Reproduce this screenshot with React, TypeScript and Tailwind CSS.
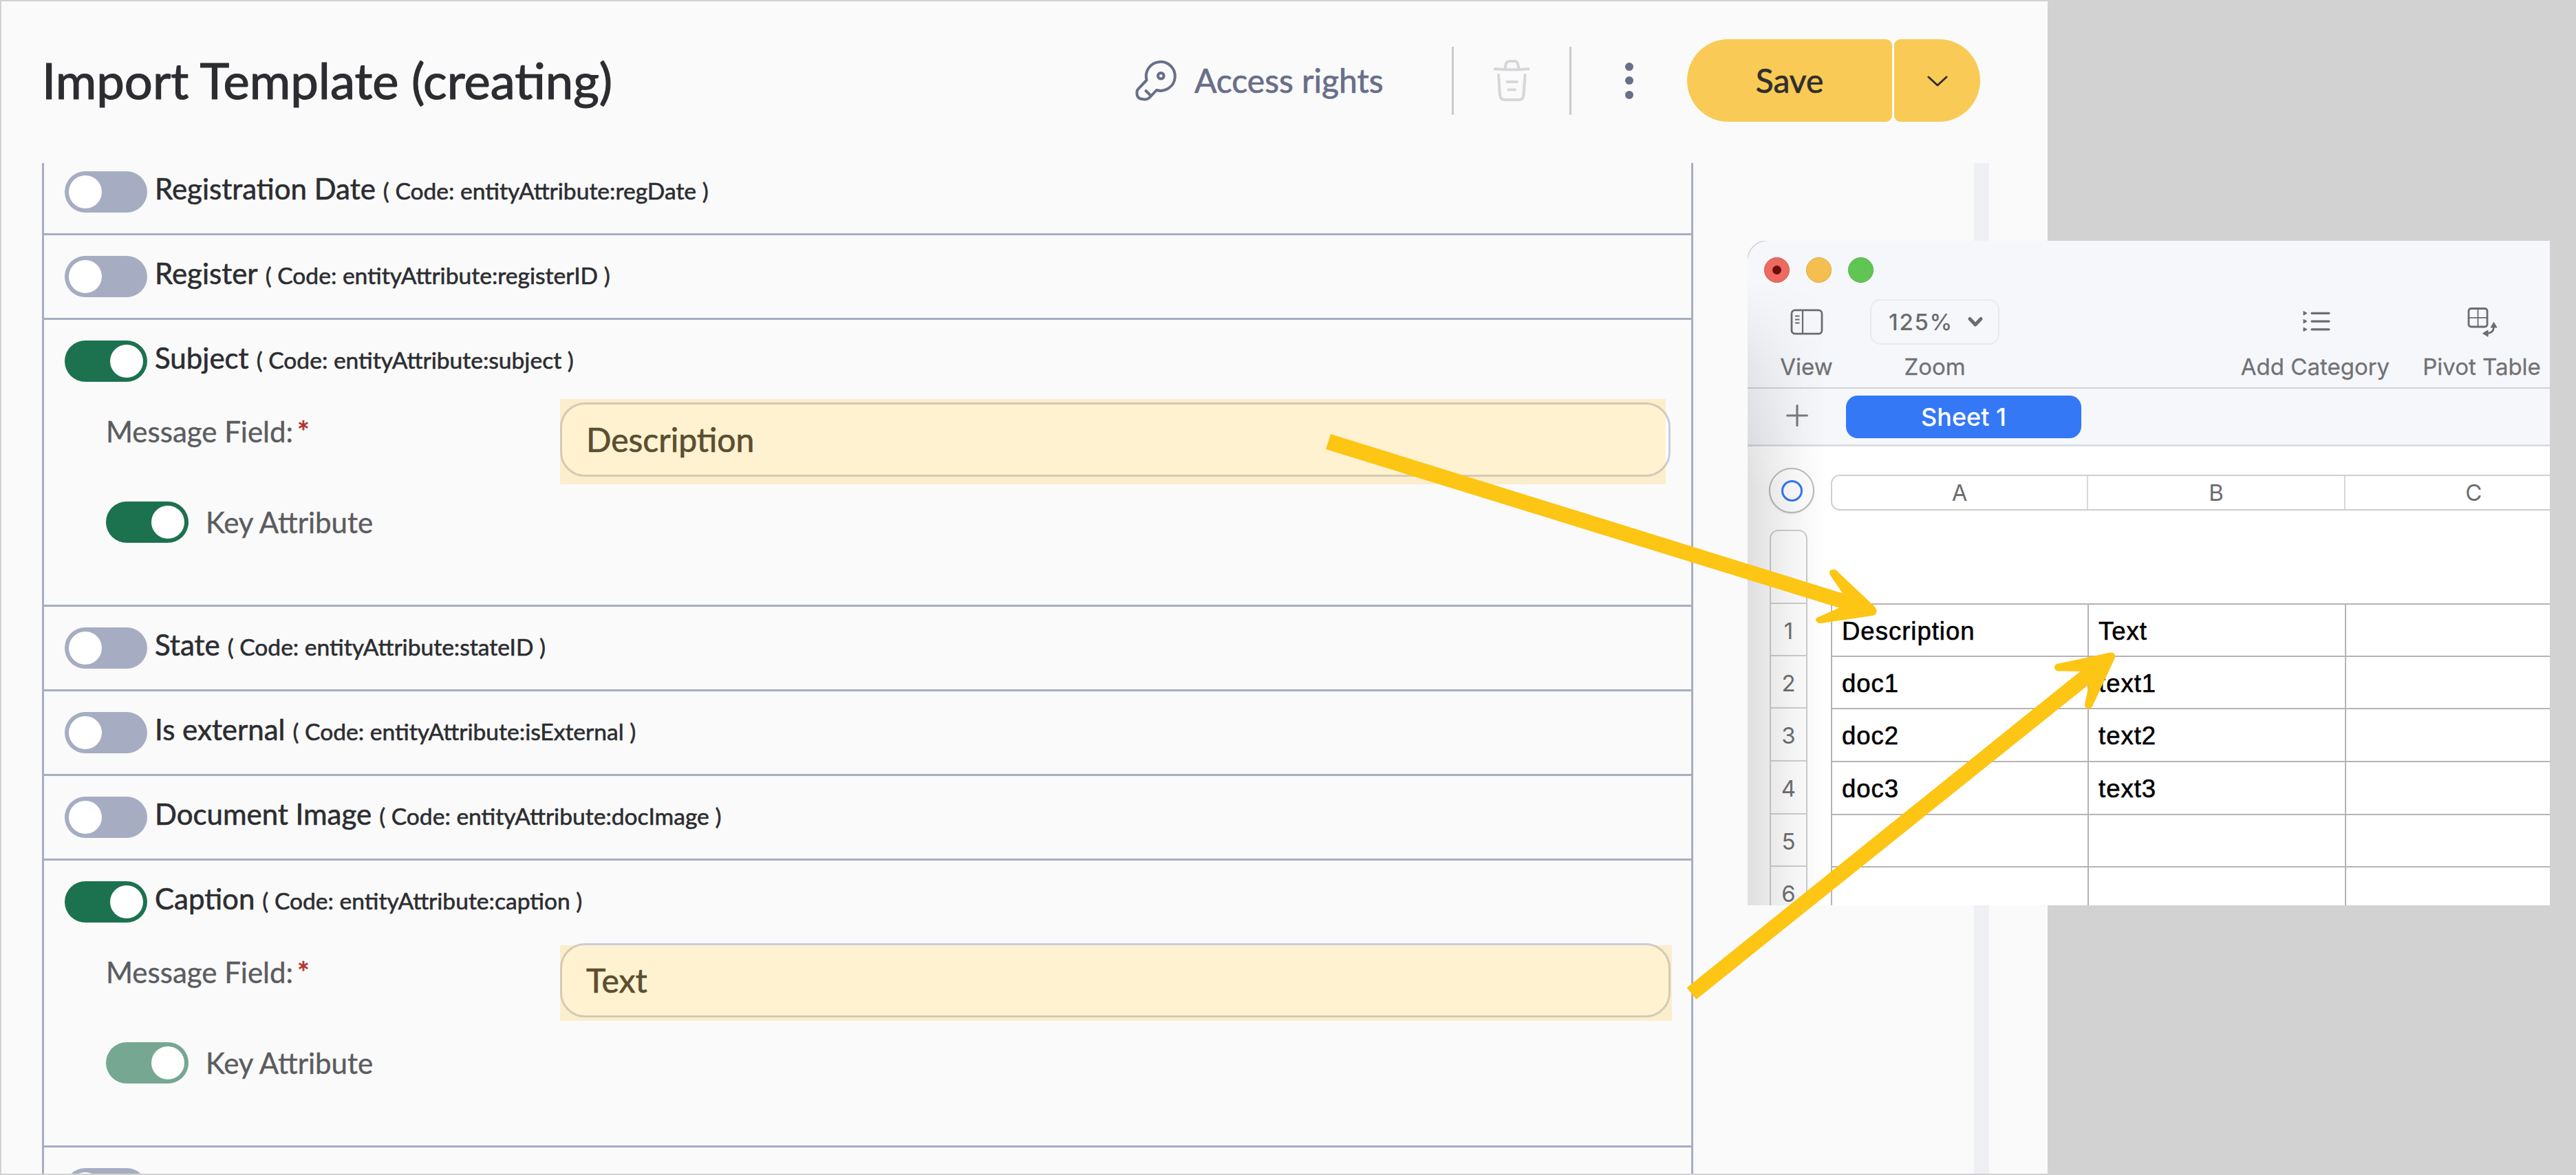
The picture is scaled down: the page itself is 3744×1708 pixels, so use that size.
import type { ReactNode } from 'react';

function Toggle({ on = false, dim = false }: { on?: boolean; dim?: boolean }) {
  const track = on ? (dim ? 'justify-end bg-[#76a793]' : 'justify-end bg-[#1c724f]') : 'justify-start bg-[#a6adc3]';
  return (
    <span className={`flex h-[60px] w-[120px] shrink-0 items-center rounded-full px-[6px] ${track}`}>
      <span className="h-12 w-12 rounded-full bg-white" />
    </span>
  );
}

function AttributeRow({ label, code, on, children }: { label: string; code: string; on?: boolean; children?: ReactNode }) {
  return (
    <div className="shrink-0 border-b-[3px] border-[#a8adc1] pl-[30px] pt-[30px]">
      <div className="flex h-[60px] items-center">
        <Toggle on={on} />
        <div className="-mt-[8px] ml-[11px] flex items-baseline gap-[11px] whitespace-nowrap text-[42px] leading-[60px] text-[#2c2d31] [-webkit-text-stroke:0.600px_#2c2d31]">
          <span>{label}</span>
          <span className="text-[33.6px]">( Code: {code} )</span>
        </div>
      </div>
      {children ?? <div className="h-[30px]" />}
    </div>
  );
}

function FieldSettings({ value, dim, highlight }: { value: string; dim?: boolean; highlight: string }) {
  return (
    <div className="h-[324px] pl-[60px] pt-[30px]">
      <div className="flex h-[108px]">
        <div className="mt-[12px] flex h-[60px] w-[660px] gap-[6px] text-[42px] leading-[60px] text-[#5b5c60] [-webkit-text-stroke:0.400px_#5b5c60]">
          <span>Message Field:</span>
          <span className="text-[#b5332c] [-webkit-text-stroke:0.800px_#b5332c]">*</span>
        </div>
        <div className="relative h-[108px] w-[1614px] rounded-[36px] border-[3px] border-[#c9ccdc] bg-white">
          <div className="pl-[35px] text-[48px] leading-[102px] text-[#2e2f33] [-webkit-text-stroke:0.700px_#2e2f33]">{value}</div>
          <div className={`absolute bg-[#ffc329]/[0.215] ${highlight}`} />
        </div>
      </div>
      <div className="mt-[36px] flex items-center gap-[25px] text-[42px] leading-[60px] text-[#5b5c60] [-webkit-text-stroke:0.400px_#5b5c60]">
        <Toggle on dim={dim} />
        <span>Key Attribute</span>
      </div>
    </div>
  );
}

function KeyIcon() {
  return (
    <svg className="h-[62px] w-[62px]" viewBox="0 0 62 62" fill="none" stroke="#696e89" strokeWidth="4" strokeLinecap="round" strokeLinejoin="round">
      <path d="M17.500 30.200A21 21 0 1 1 32 45L22.600 55Q19.500 58.600 15 58.400L11.500 58.100Q6.500 57.600 4.700 54.600Q3.300 52.500 3.300 48.500Q3.200 45.600 5 43.700L17.500 30.500" />
      <path d="M16.500 46L22.500 52" />
      <circle cx="38.300" cy="24.200" r="4.300" />
    </svg>
  );
}

function TrashIcon() {
  return (
    <svg className="h-[62px] w-[54px]" viewBox="0 0 54 62" fill="none" stroke="#d5d7da" strokeWidth="4" strokeLinecap="round" strokeLinejoin="round">
      <path d="M1 14Q27 16.500 53 14" strokeLinecap="butt" />
      <path d="M17.500 13L18.500 8Q19.700 3 24 3H31Q35 3 36 7L37.500 13" />
      <path d="M8 23L10 52Q10.500 59 17 59H38Q44 59 44.500 52L46.500 23" />
      <path d="M20.500 33H35M22.500 44.500H32" />
    </svg>
  );
}

function FormPanel() {
  return (
    <section className="flex h-[1704px] w-[2974px] flex-col bg-[#fafafa]">
      <header className="mb-[5px] flex h-[230px] shrink-0 items-center pl-[59px] text-[#696e89]">
        <h1 className="-mt-[2px] w-[1588px] text-[72.4px] leading-[90px] text-[#2c2d31] [-webkit-text-stroke:1.200px_#2c2d31]">Import Template (creating)</h1>
        <KeyIcon />
        <span className="ml-[25px] w-[374px] text-[48px] leading-[60px] [-webkit-text-stroke:0.700px_#696e89]">Access rights</span>
        <span className="h-[99px] w-[3px] bg-[#cbcbcc]" />
        <span className="flex w-[168px] justify-center"><TrashIcon /></span>
        <span className="h-[99px] w-[3px] bg-[#cbcbcc]" />
        <span className="ml-[78px] flex w-[12px] flex-col gap-[8.500px]">
          <i className="h-3 w-3 rounded-full bg-[#696e89]" />
          <i className="h-3 w-3 rounded-full bg-[#696e89]" />
          <i className="h-3 w-3 rounded-full bg-[#696e89]" />
        </span>
        <span className="ml-[78px] flex h-[120px] w-[298px] items-center justify-center rounded-l-[60px] rounded-r-[9px] bg-[#f9cb56] text-[48px] leading-[60px] text-[#302f2d] [-webkit-text-stroke:0.700px_#302f2d]">Save</span>
        <span className="ml-[3px] flex h-[120px] w-[125px] items-center justify-center rounded-l-[9px] rounded-r-[60px] bg-[#f9cb56]">
          <svg className="h-[16px] w-[30px] translate-y-px" viewBox="0 0 30 16" fill="none" stroke="#302f2d" strokeWidth="3" strokeLinecap="round" strokeLinejoin="round">
            <path d="M2 2L15 14L28 2" />
          </svg>
        </span>
      </header>
      <div className="flex min-h-0 flex-1 pl-[59px]">
        <div className="flex h-full w-[2400px] flex-col overflow-hidden border-x-[3px] border-[#a8adc1]">
          <div className="-mt-[18px] shrink-0">
            <AttributeRow label="Registration Date" code="entityAttribute:regDate" />
          </div>
          <AttributeRow label="Register" code="entityAttribute:registerID" />
          <AttributeRow label="Subject" code="entityAttribute:subject" on>
            <FieldSettings value="Description" highlight="-top-[8px] -left-[3px] h-[124px] w-[1607px]" />
          </AttributeRow>
          <AttributeRow label="State" code="entityAttribute:stateID" />
          <AttributeRow label="Is external" code="entityAttribute:isExternal" />
          <AttributeRow label="Document Image" code="entityAttribute:docImage" />
          <AttributeRow label="Caption" code="entityAttribute:caption" on>
            <FieldSettings value="Text" dim highlight="top-0 -left-[3px] h-[110px] w-[1616px]" />
          </AttributeRow>
          <div className="h-[38px] overflow-hidden pl-[30px] pt-[30px]"><Toggle /></div>
        </div>
        <div className="ml-[408px] h-full w-[22px] bg-[#eef0f4]" />
      </div>
    </section>
  );
}

function ToolbarItem({ label, className, children }: { label: string; className: string; children: ReactNode }) {
  return (
    <div className={`flex shrink-0 flex-col items-center ${className}`}>
      <div className="flex h-[66px] items-center justify-center">{children}</div>
      <span className="mt-[12px] whitespace-nowrap text-[33px] leading-[40px] text-[#717274] [-webkit-text-stroke:0.300px_#717274]">{label}</span>
    </div>
  );
}

const sheetRows = [
  { n: 1, a: 'Description', b: 'Text', h: 'h-[76px]' },
  { n: 2, a: 'doc1', b: 'text1', h: 'h-[76px]' },
  { n: 3, a: 'doc2', b: 'text2', h: 'h-[77px]' },
  { n: 4, a: 'doc3', b: 'text3', h: 'h-[77px]' },
  { n: 5, a: '', b: '', h: 'h-[76px]' },
  { n: 6, a: '', b: '', h: 'h-[76px]' },
];

function SheetWindow() {
  return (
    <section className="absolute left-[2540px] top-[350px] flex h-[966px] w-[1166px] flex-col overflow-hidden bg-[#fafafa] font-[Inter,sans-serif]">
      <div className="flex h-[215px] shrink-0 flex-col rounded-tl-[30px] border-b-[2px] border-[#d1d2d5] bg-[#f6f7fb] shadow-[-1px_-1px_0_#cfcfcf]">
        <div className="mt-[24px] flex gap-[24px] pl-[24px]">
          <span className="flex h-[37px] w-[37px] items-center justify-center rounded-full border border-[#d85a4f] bg-[#ec6a5f]">
            <i className="h-[13px] w-[13px] rounded-full bg-[#6b0f08]" />
          </span>
          <span className="h-[37px] w-[37px] rounded-full border border-[#dfa940] bg-[#f4bf50]" />
          <span className="h-[37px] w-[37px] rounded-full border border-[#58b24b] bg-[#61c554]" />
        </div>
        <div className="mt-[24px] flex">
          <ToolbarItem label="View" className="ml-[25px] w-[121px]">
            <svg className="h-[38px] w-[48px]" viewBox="0 0 48 38" fill="none" stroke="#6b6c6e" strokeWidth="2.800">
              <rect x="2" y="1.800" width="44" height="34.400" rx="5" />
              <path d="M18 2V36" strokeWidth="2.200" />
              <path d="M7 10.500H13.500M7 15.500H13.500M7 20.500H13.500" strokeWidth="2" />
            </svg>
          </ToolbarItem>
          <ToolbarItem label="Zoom" className="ml-[32px] w-[188px]">
            <div className="flex h-[66px] w-[188px] items-center rounded-[15px] border-[2px] border-[#e9eaee] pl-[25px] text-[33px] font-medium leading-[40px] tracking-[1.700px] text-[#6b6c6e]">
              <span className="w-[93px] whitespace-nowrap">125%</span>
              <svg className="ml-[21px] h-[16px] w-[24px]" viewBox="0 0 24 16" fill="none" stroke="#6b6c6e" strokeWidth="5" strokeLinecap="round" strokeLinejoin="round">
                <path d="M4 3.500L12 12L20 3.500" />
              </svg>
            </div>
          </ToolbarItem>
          <ToolbarItem label="Add Category" className="ml-[349px] w-[220px]">
            <svg className="h-[32px] w-[40px] translate-x-[2px] -translate-y-px" viewBox="0 0 40 32" fill="#6b6c6e" stroke="#6b6c6e">
              <path d="M1 1.500L6 4.300L1 7.100ZM1 13.300L6 16.100L1 18.900ZM1 25L6 27.800L1 30.600Z" strokeWidth="1" />
              <path d="M13 4.300H38M13 16.100H38M13 27.800H38" strokeWidth="3.200" strokeLinecap="round" />
            </svg>
          </ToolbarItem>
          <ToolbarItem label="Pivot Table" className="ml-[44px] w-[176px]">
            <svg className="h-[44px] w-[46px] translate-x-px" viewBox="0 0 46 44" fill="none" stroke="#6b6c6e" strokeWidth="2.800">
              <rect x="3" y="2.500" width="27" height="26.500" rx="3.500" />
              <path d="M16.500 3V29M3 15.800H30" strokeWidth="1.800" />
              <path d="M39.500 29Q39.500 38 30 38.600" strokeWidth="2.600" />
              <path d="M39.500 22.500L44 30H35ZM23.500 38.600L31 34V43.200Z" fill="#6b6c6e" strokeWidth="1" />
            </svg>
          </ToolbarItem>
        </div>
      </div>
      <div className="flex h-[84px] shrink-0 items-center border-b-[3px] border-[#dcdde0] bg-[#f6f7fb]">
        <svg className="ml-[56px] h-[32px] w-[32px] -translate-y-[2px]" viewBox="0 0 32 32" stroke="#7b7c7e" strokeWidth="3.200" strokeLinecap="round">
          <path d="M16 1.600V30.400M1.600 16H30.400" />
        </svg>
        <span className="ml-[55px] flex h-[62px] w-[342px] items-center justify-center rounded-[17px] bg-[#3478f6] pt-px text-[36px] font-medium leading-[44px] text-white">Sheet 1</span>
      </div>
      <div className="flex min-h-0 flex-1 bg-white text-[33px] text-[#6b6c6e]">
        <div className="w-[121px] shrink-0 pt-[31px]">
          <div className="ml-[31px] flex h-[66px] w-[66px] items-center justify-center rounded-full border-[2px] border-[#bdbdbf] bg-white shadow-[0_1px_2px_#00000022]">
            <span className="h-[31px] w-[31px] rounded-full border-[3px] border-[#3478f6]" />
          </div>
          <div className="ml-[32px] mt-[24px] w-[55px] overflow-hidden rounded-t-[13px] border-[2px] border-b-0 border-[#cfcfd0] bg-white text-[#707173]">
            <div className="h-[106px] border-b-[2px] border-[#d0d0d1]" />
            {sheetRows.map((r) => (
              <div key={r.n} className={`flex justify-center border-b-[2px] border-[#d0d0d1] leading-[78px] ${r.h}`}>{r.n}</div>
            ))}
          </div>
        </div>
        <div className="w-[1045px] shrink-0 overflow-hidden pt-[41px]">
          <div className="flex h-[52px] w-[1123px] rounded-tl-[13px] rounded-bl-[13px] border-[2px] border-[#d0d0d2] leading-[48px] shadow-[0_1px_1px_#0000000d]">
            <span className="w-[373px] border-r-[2px] border-[#d8d8da] text-center">A</span>
            <span className="w-[374px] border-r-[2px] border-[#d8d8da] text-center">B</span>
            <span className="w-[374px] text-center">C</span>
          </div>
          <div className="mt-[135px] w-[1124px] border-l-[2px] border-t-[2px] border-[#b4b4b4] font-['Liberation_Sans',sans-serif] text-[36.5px] tracking-[1px] text-black [-webkit-text-stroke:0.600px_black]">
            {sheetRows.map((r) => (
              <div key={r.n} className={`flex border-b-[2px] border-[#b4b4b4] leading-[78px] ${r.h}`}>
                <span className="w-[373px] border-r-[2px] border-[#b4b4b4] pl-[14px]">{r.a}</span>
                <span className="w-[374px] border-r-[2px] border-[#b4b4b4] pl-[14px]">{r.b}</span>
              </div>
            ))}
          </div>
        </div>
      </div>
      <div className="absolute bottom-0 left-0 top-[60px] w-[130px] bg-[linear-gradient(to_right,#00000020_0px,#00000016_30px,#0000000a_70px,#00000000_115px)] [mask-image:linear-gradient(to_bottom,transparent_0px,#0008_120px,black_300px)]" />
    </section>
  );
}

function Arrows() {
  return (
    <svg className="absolute left-0 top-0 h-[1708px] w-[3744px]" viewBox="0 0 3744 1708" fill="#fdc514">
      <path d="M1934 631L2678 862.500L2660 836Q2657 829 2663 828Q2668 827 2672 832L2725 882Q2729 887 2727 891Q2726 894 2721 895L2647 906Q2640 906 2639 901Q2639 898 2643 897L2673 883.500L1927 653Z" />
      <path d="M2451.700 1435.700L3023.400 975.900L2992 975.500Q2986 975 2986 970Q2986 966 2990 965L3067 948.500Q3075 948 3074 956L3041 1027Q3038 1031 3034 1030Q3030 1029 3030 1024L3036 995L2465.400 1452.700Z" />
    </svg>
  );
}

export default function App() {
  return (
    <main className="relative h-[1708px] w-[3744px] overflow-hidden bg-[#d2d2d2] p-[2px] font-[Lato,sans-serif]">
      <FormPanel />
      <SheetWindow />
      <Arrows />
    </main>
  );
}
